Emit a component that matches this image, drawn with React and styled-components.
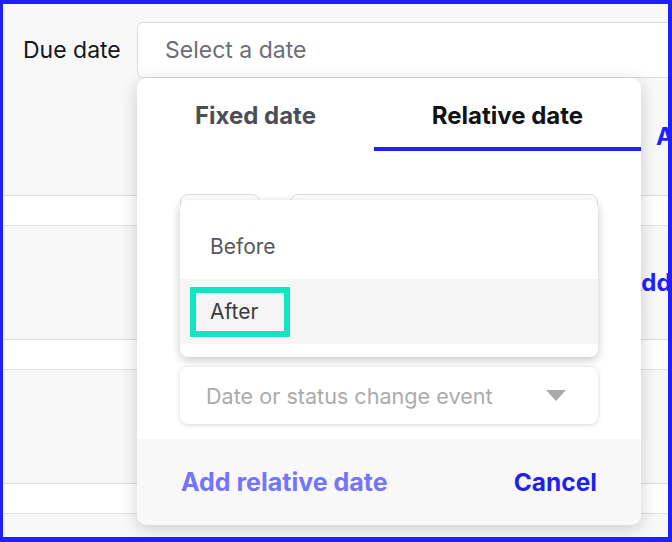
import styled, { createGlobalStyle } from "styled-components";

const GlobalStyle = createGlobalStyle`
  html, body {
    margin: 0;
    padding: 0;
  }
  body {
    font-family: Inter, "Noto Sans", sans-serif;
    background: #fff;
  }
`;

function Caret() {
  return (
    <svg width="20" height="11" viewBox="0 0 20 11">
      <path d="M0 0 L20 0 L10 11 Z" fill="#a9a9a9" />
    </svg>
  );
}

function App() {
  return (
    <>
      <GlobalStyle />
      <Frame>
        <Row $height={191} $shade>
          <FieldLabel>Due date</FieldLabel>
          <FieldColumn>
            <DateInput>Select a date</DateInput>
            <ActionLink $indent={519} $top={46}>Add date</ActionLink>
          </FieldColumn>
        </Row>
        <Row $height={29} />
        <Row $height={113} $shade $center>
          <ActionLink $indent={621}>Add</ActionLink>
        </Row>
        <Row $height={29} />
        <Row $height={113} $shade />
        <Row $height={29} />
        <Row $height={40} $shade />

        <Popover>
          <Tabs>
            <Tab>Fixed date</Tab>
            <Tab $active>Relative date</Tab>
          </Tabs>
          <Body>
            <SelectRow>
              <Select $width={80} />
              <Select $grow />
            </SelectRow>
            <Select />
            <Select $raised>
              <Placeholder>Date or status change event</Placeholder>
              <Caret />
            </Select>

            <Menu>
              <MenuItem>
                <ItemLabel>Before</ItemLabel>
              </MenuItem>
              <MenuItem $hover>
                <ItemLabel $focused>After</ItemLabel>
              </MenuItem>
            </Menu>
          </Body>
          <Footer>
            <FooterButton $disabled>Add relative date</FooterButton>
            <FooterButton>Cancel</FooterButton>
          </Footer>
        </Popover>
      </Frame>
    </>
  );
}

const Frame = styled.div`
  position: relative;
  box-sizing: border-box;
  width: 672px;
  height: 542px;
  border-style: solid;
  border-color: #1f1fff;
  border-width: 4px 4px 5px 3px;
  background: #f8f8f8;
  overflow: hidden;
`;

const Row = styled.div`
  display: flex;
  align-items: ${(p) => (p.$center ? "center" : "flex-start")};
  height: ${(p) => p.$height}px;
  background: ${(p) => (p.$shade ? "#f8f8f8" : "#fff")};
  border-bottom: 1px solid #dedede;
  flex-shrink: 0;
`;

const FieldLabel = styled.div`
  width: 114px;
  padding-left: 20px;
  margin-top: 33px;
  font-size: 23px;
  line-height: 26px;
  color: #14171c;
  flex-shrink: 0;
`;

const FieldColumn = styled.div`
  display: flex;
  flex-direction: column;
  padding-top: 18px;
`;

const DateInput = styled.div`
  box-sizing: border-box;
  width: 620px;
  height: 56px;
  display: flex;
  align-items: center;
  padding-left: 27px;
  background: #fff;
  border: 1px solid #dcdcdc;
  border-radius: 6px;
  font-size: 23px;
  color: #6d6e75;
`;

const ActionLink = styled.div`
  margin-left: ${(p) => p.$indent}px;
  margin-top: ${(p) => p.$top || 0}px;
  font-size: 24px;
  line-height: 26px;
  font-weight: 700;
  color: #1f1fff;
  white-space: nowrap;
`;

const Popover = styled.div`
  position: absolute;
  left: 134px;
  top: 74px;
  width: 504px;
  height: 447px;
  display: flex;
  flex-direction: column;
  background: #fff;
  border-radius: 10px;
  box-shadow: 0 4px 18px rgba(0, 0, 0, 0.18);
  overflow: hidden;
`;

const Tabs = styled.div`
  display: flex;
`;

const Tab = styled.div`
  flex: 1 1 auto;
  text-align: center;
  padding: 26px 0 19px;
  font-size: 24px;
  line-height: 24px;
  font-weight: 700;
  color: ${(p) => (p.$active ? "#101216" : "#4d4e55")};
  border-bottom: 4px solid ${(p) => (p.$active ? "#1f1fff" : "transparent")};
`;

const Body = styled.div`
  position: relative;
  flex: 1;
  display: flex;
  flex-direction: column;
  gap: 29.5px;
  padding: 43px 43px 0;
`;

const SelectRow = styled.div`
  display: flex;
  gap: 30px;
`;

const Select = styled.div`
  box-sizing: border-box;
  height: 57px;
  width: ${(p) => (p.$width ? `${p.$width}px` : "auto")};
  flex: ${(p) => (p.$grow ? 1 : "none")};
  display: flex;
  align-items: center;
  justify-content: space-between;
  padding: 0 32px 0 26px;
  background: #fff;
  border-radius: 8px;
  border: ${(p) => (p.$raised ? "none" : "1px solid #dcdcdc")};
  box-shadow: ${(p) => (p.$raised ? "0 1px 5px rgba(0, 0, 0, 0.16)" : "none")};
`;

const Placeholder = styled.span`
  font-size: 21.6px;
  color: #ababab;
`;

const Menu = styled.div`
  position: absolute;
  left: 43px;
  top: 49px;
  width: 418px;
  box-sizing: border-box;
  padding: 14px 0 13px;
  background: #fff;
  border-radius: 8px;
  box-shadow: 0 3px 10px rgba(0, 0, 0, 0.22);
`;

const MenuItem = styled.div`
  height: 65px;
  display: flex;
  align-items: center;
  padding-left: 10px;
  background: ${(p) => (p.$hover ? "#f5f5f5" : "#fff")};
`;

const ItemLabel = styled.div`
  box-sizing: border-box;
  width: 100px;
  height: 50px;
  display: flex;
  align-items: center;
  padding-left: 14px;
  border: 6px solid ${(p) => (p.$focused ? "#12e4c4" : "transparent")};
  font-size: 21px;
  color: ${(p) => (p.$focused ? "#3a3b40" : "#56575d")};
`;

const Footer = styled.div`
  height: 86px;
  display: flex;
  align-items: center;
  justify-content: space-between;
  padding: 0 44px 0 44px;
  background: #f8f8f8;
`;

const FooterButton = styled.div`
  font-size: ${(p) => (p.$disabled ? 25 : 24.5)}px;
  font-weight: 700;
  color: ${(p) => (p.$disabled ? "#7474ff" : "#1f1fee")};
`;

export default App;
